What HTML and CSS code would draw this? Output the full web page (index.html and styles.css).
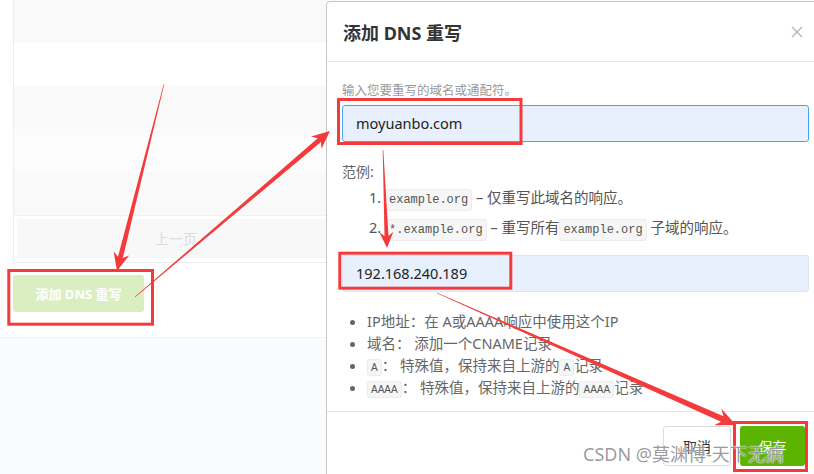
FILE: index.html
```html
<!DOCTYPE html>
<html lang="zh-CN">
<head>
    <meta charset="UTF-8">
    <meta name="viewport" content="width=device-width, initial-scale=1.0">
    <title>添加 DNS 重写</title>
    <link rel="stylesheet" href="styles.css">
</head>
<body>
    <div class="page">
        <div class="panel">
            <div class="table">
                <div class="row row-grey"></div>
                <div class="row"></div>
                <div class="row row-grey"></div>
                <div class="row row-light"></div>
                <div class="row row-grey"></div>
                <div class="pager"><span class="pagerBtn">上一页</span></div>
            </div>
            <div class="actions">
                <button class="btnAdd">添加 DNS 重写</button>
            </div>
        </div>
    </div>

    <div class="modal">
        <div class="modalHeader">
            <h4 class="modalTitle">添加 DNS 重写</h4>
            <svg class="close" width="12" height="12" viewBox="0 0 12 12">
                <path d="M1 1L11 11M11 1L1 11" stroke="#b5b5b5" stroke-width="1.4" fill="none"/>
            </svg>
        </div>
        <div class="modalBody">
            <p class="hint">输入您要重写的域名或通配符。</p>
            <div class="field field-focus">moyuanbo.com</div>
            <p class="examples">范例:</p>
            <ol class="exampleList">
                <li><code>example.org</code> – 仅重写此域名的响应。</li>
                <li><code>*.example.org</code> – 重写所有<code>example.org</code> 子域的响应。</li>
            </ol>
            <div class="field">192.168.240.189</div>
            <ul class="tips">
                <li>IP地址：在 A或AAAA响应中使用这个IP</li>
                <li>域名： 添加一个CNAME记录</li>
                <li><code class="small">A</code>： 特殊值，保持来自上游的<code class="small">A</code>记录</li>
                <li><code class="small">AAAA</code>： 特殊值，保持来自上游的<code class="small">AAAA</code>记录</li>
            </ul>
        </div>
        <div class="modalFooter">
            <button class="btn btnCancel">取消</button>
            <button class="btn btnSave">保存</button>
        </div>
    </div>

    <!-- 截图上的红色标注 -->
    <svg class="marks" width="814" height="474" viewBox="0 0 814 474">
        <g fill="none" stroke="#f43a3a" stroke-width="3">
            <rect x="338.5" y="99.5" width="182.5" height="44"/>
            <rect x="339.8" y="253.2" width="171" height="35"/>
            <rect x="8.8" y="270.5" width="143.7" height="53.7"/>
            <rect x="734.5" y="422.5" width="72" height="48"/>
        </g>
        <g fill="#f43a3a">
            <polygon points="164.29,84.07 122.83,258.03 129.15,255.49 117,271 113.63,251.59 117.99,256.81 163.71,83.93"/>
            <polygon points="135.19,297.23 320.96,141.97 321.48,148.76 330,131 311.10,136.58 317.72,138.17 134.81,296.77"/>
            <polygon points="383.3,149.99 388.51,235.93 393.34,231.72 387,248 379.36,232.30 384.51,236.09 382.7,150.01"/>
            <polygon points="436.88,293.27 721.07,421.68 714.07,425.15 736,425 721.34,408.69 723.49,416.20 437.12,292.73"/>
        </g>
    </svg>

    <div class="watermark">CSDN @莫渊博-天下无病</div>
</body>
</html>
```

FILE: styles.css
```css
*{
    margin: 0;
    padding: 0;
    box-sizing: border-box;
}
body{
    width: 814px;
    height: 474px;
    overflow: hidden;
    position: relative;
    background-color: #fafbfd;
    font-family: "Noto Sans", "Noto Sans CJK SC", sans-serif;
    color: #555;
}
button{
    font-family: inherit;
    border: none;
    cursor: pointer;
}
li{
    list-style: none;
}

/* 左侧页面 */
.page{
    width: 340px;
}
.panel{
    background-color: #fff;
    height: 338px;
    border-bottom: 1px solid #f0f2f5;
}
.table{
    margin-left: 13px;
    border-left: 1px solid #eee;
    border-bottom: 1px solid #eee;
}
.row{
    height: 43px;
    background-color: #fff;
}
.row-grey{
    background-color: #f9f9f9;
}
.row-light{
    background-color: #fcfcfc;
}
.pager{
    height: 47px;
    padding: 3px 0 4px 3px;
    border-top: 1px solid #f0f0f0;
}
.pagerBtn{
    display: block;
    width: 318px;
    height: 39px;
    line-height: 39px;
    text-align: center;
    background-color: #f8f8f8;
    color: #dcdcdc;
    font-size: 14px;
}
.actions{
    padding: 12px 0 0 13px;
}
.btnAdd{
    width: 131px;
    height: 37px;
    border-radius: 3px;
    background-color: #d9efc2;
    color: #fff;
    font-size: 13px;
    font-weight: bold;
}

/* 弹窗 */
.modal{
    position: absolute;
    left: 326px;
    top: 1px;
    width: 500px;
    height: 500px;
    background-color: #fff;
    border: 1px solid #c8c8c8;
    border-radius: 4px;
}
.modalHeader{
    height: 60px;
    padding: 0 22px 0 16px;
    display: flex;
    align-items: center;
    justify-content: space-between;
    border-bottom: 1px solid #e6e6e6;
}
.modalTitle{
    font-size: 18px;
    font-weight: bold;
    color: #333;
}
.modalBody{
    padding: 19px 16px 13px 15px;
}
.hint{
    font-size: 12.5px;
    line-height: 20px;
    color: #999;
}
.field{
    margin-top: 4px;
    height: 37px;
    line-height: 35px;
    padding-left: 13px;
    border: 1px solid #dde4ef;
    border-radius: 3px;
    background-color: #e8f0fe;
    font-size: 14.5px;
    color: #222;
}
.field-focus{
    border-color: #4aa3f0;
}
.exampleList + .field{
    margin-top: 6px;
}
.examples{
    margin-top: 20px;
    font-size: 14px;
    line-height: 20px;
    color: #666;
}
.exampleList{
    margin: 0 0 13px;
    padding-left: 43px;
    font-size: 14.5px;
    color: #555;
}
.exampleList li{
    list-style: decimal;
    height: 30px;
    line-height: 30px;
}
code{
    font-family: "Liberation Mono", monospace;
    font-size: 12px;
    padding: 3px 3px;
    background-color: #f6f6f6;
    border: 1px solid #ececec;
    border-radius: 3px;
    color: #555;
}
.tips{
    margin-top: 18px;
    padding-left: 25px;
    font-size: 14.5px;
    color: #666;
}
.tips li{
    list-style: disc;
    height: 22px;
    line-height: 22px;
}
code.small{
    font-family: "Liberation Sans", sans-serif;
    font-size: 10px;
    padding: 2px 3px;
}
.modalFooter{
    border-top: 1px solid #e6e6e6;
    padding: 14px 20px 0 0;
    display: flex;
    justify-content: flex-end;
    gap: 9px;
}
.btn{
    height: 40px;
    font-size: 14px;
    border-radius: 3px;
}
.btnCancel{
    width: 68px;
    background-color: #fff;
    border: 1px solid #dcdcdc;
    color: #333;
}
.btnSave{
    width: 65px;
    background-color: #5cb300;
    color: #fff;
}

/* 标注与水印 */
.marks{
    position: absolute;
    left: 0;
    top: 0;
    pointer-events: none;
}
.watermark{
    position: absolute;
    left: 583px;
    top: 441px;
    font-size: 18px;
    line-height: 26px;
    color: rgba(110, 110, 110, 0.7);
    text-shadow: 0 0 1px #fff, 0 0 2px #fff;
    white-space: nowrap;
    pointer-events: none;
}
```
